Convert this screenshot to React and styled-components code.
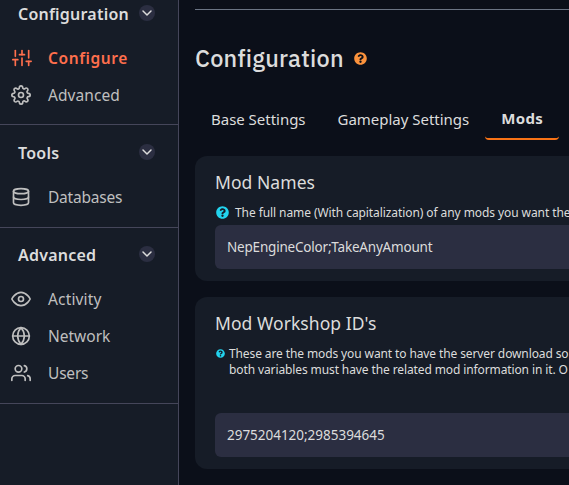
import React from "react";
import styled, { createGlobalStyle } from "styled-components";
import { FiSliders, FiSettings, FiDatabase, FiEye, FiGlobe, FiUsers, FiChevronDown } from "react-icons/fi";
import { FaQuestionCircle } from "react-icons/fa";

const GlobalStyle = createGlobalStyle`
  * { box-sizing: border-box; }
  body {
    margin: 0;
    overflow: hidden;
    background: #0b0f19;
    color: #dcdcdc;
    font-family: "Noto Sans", "Open Sans", sans-serif;
  }
`;

const Page = styled.div`
  display: flex;
  width: 100vw;
  height: 100vh;
  overflow: hidden;
`;

const Sidebar = styled.nav`
  flex: 0 0 179px;
  height: 100%;
  overflow: hidden;
  background: #161c27;
  border-right: 1px solid #45465a;
`;

const Section = styled.section`
  padding: 14px 0 12px;
  border-bottom: 1px solid #45465a;
  &:first-child { margin-top: -14px; padding-bottom: 11px; }
  &:last-child { padding-top: 13px; }
`;

const SectionHeader = styled.div`
  display: flex;
  align-items: center;
  justify-content: space-between;
  height: 28px;
  margin-bottom: 11px;
  padding: 0 23px 0 18px;
`;

const SectionTitle = styled.span`
  font-size: 16px;
  font-weight: 600;
  line-height: 28px;
  letter-spacing: 0.22px;
  white-space: nowrap;
`;

const Toggle = styled.span`
  display: flex;
  align-items: center;
  justify-content: center;
  width: 16px;
  height: 16px;
  margin-top: -2px;
  border-radius: 50%;
  background: #2b2e41;
  svg { flex: none; width: 16px; height: 16px; stroke-width: 2.2; }
`;

const NavItem = styled.a`
  display: flex;
  align-items: center;
  gap: ${(p) => (p.$active ? 16 : 17)}px;
  height: 37px;
  padding-left: ${(p) => (p.$active ? 12 : 11)}px;
  font-size: 15.5px;
  font-weight: ${(p) => (p.$active ? 600 : 400)};
  color: ${(p) => (p.$active ? "#ff6f4d" : "#bfbfbf")};
  svg { width: 20px; height: 20px; stroke-width: 2; }
  span { letter-spacing: ${(p) => p.$track || 0}px; }
`;

const Main = styled.main`
  flex: 1;
  min-width: 0;
  padding: 9px 0 0 16px;
`;

const Rule = styled.hr`
  height: 1px;
  margin: 0;
  border: 0;
  background: #6b7484;
`;

const Heading = styled.h1`
  display: flex;
  align-items: center;
  gap: 10px;
  height: 32px;
  margin: 32px 0 0;
  font-family: "IBM Plex Sans", "Noto Sans", sans-serif;
  font-size: 23.5px;
  font-weight: 500;
  letter-spacing: 0.25px;
  white-space: nowrap;
  svg { width: 13px; height: 13px; color: #fb923c; }
`;

const Tabs = styled.div`
  display: flex;
  height: 40px;
  margin-top: 26px;
`;

const Tab = styled.div`
  padding: 0 16px;
  line-height: 39px;
  font-size: 15px;
  white-space: nowrap;
  letter-spacing: -0.02px;
  border-bottom: 2px solid transparent;
  ${(p) => p.$active && `
    font-weight: 700;
    line-height: 37px;
    letter-spacing: 0.4px;
    border-color: #f97316;
    border-radius: 4px;
  `}
`;

const Card = styled.section`
  height: ${(p) => p.$height}px;
  margin: 16px -12px 0 0;
  padding: 14px 0 0 20px;
  border-radius: 12px;
  background: #161c27;
`;

const CardTitle = styled.h2`
  height: 24px;
  margin: 0;
  font-size: 17.5px;
  font-weight: 400;
  line-height: 24px;
  letter-spacing: 0.06px;
  white-space: nowrap;
`;

const Hint = styled.div`
  display: flex;
  height: ${(p) => p.$height}px;
  margin-top: 11px;
  padding-left: 1px;
  gap: ${(p) => p.$gap}px;
  font-size: 12px;
  line-height: 16px;
  white-space: nowrap;
  svg {
    flex: none;
    width: ${(p) => p.$icon}px;
    height: ${(p) => p.$icon}px;
    margin-top: ${(p) => p.$iconTop}px;
    color: #22d3ee;
  }
`;

const Line = styled.div`
  letter-spacing: ${(p) => p.$track || 0}px;
`;

const Field = styled.div`
  height: 44px;
  padding-left: 12px;
  border-radius: 6px 0 0 6px;
  background: #2b2e41;
  font-size: 13.5px;
  line-height: 44px;
  letter-spacing: ${(p) => p.$track || 0}px;
  white-space: nowrap;
`;

const sections = [
  { title: "Configuration", items: [
    { label: "Configure", icon: FiSliders, active: true, track: 0.6 },
    { label: "Advanced", icon: FiSettings, track: 0.06 },
  ] },
  { title: "Tools", items: [{ label: "Databases", icon: FiDatabase, track: -0.2 }] },
  { title: "Advanced", items: [
    { label: "Activity", icon: FiEye, track: 0.15 },
    { label: "Network", icon: FiGlobe },
    { label: "Users", icon: FiUsers, track: -0.2 },
  ] },
];

export default function App() {
  return (
    <Page>
      <GlobalStyle />
      <Sidebar>
        {sections.map((s) => (
          <Section key={s.title}>
            <SectionHeader>
              <SectionTitle>{s.title}</SectionTitle>
              <Toggle><FiChevronDown /></Toggle>
            </SectionHeader>
            {s.items.map(({ label, icon: Icon, active, track }) => (
              <NavItem key={label} $active={active} $track={track}>
                <Icon />
                <span>{label}</span>
              </NavItem>
            ))}
          </Section>
        ))}
      </Sidebar>
      <Main>
        <Rule />
        <Heading>Configuration <FaQuestionCircle /></Heading>
        <Tabs>
          <Tab>Base Settings</Tab>
          <Tab>Gameplay Settings</Tab>
          <Tab $active>Mods</Tab>
        </Tabs>
        <Card $height={125}>
          <CardTitle>Mod Names</CardTitle>
          <Hint $height={20} $gap={6} $icon={13} $iconTop={1}>
            <FaQuestionCircle />
            <Line $track={-0.08}>The full name (With capitalization) of any mods you want the</Line>
          </Hint>
          <Field $track={-0.2}>NepEngineColor;TakeAnyAmount</Field>
        </Card>
        <Card $height={172}>
          <CardTitle>Mod Workshop ID's</CardTitle>
          <Hint $height={67} $gap={4} $icon={9} $iconTop={3}>
            <FaQuestionCircle />
            <div>
              <Line $track={-0.11}>These are the mods you want to have the server download so</Line>
              <Line $track={-0.11}>both variables must have the related mod information in it. O</Line>
            </div>
          </Hint>
          <Field $track={-0.02}>2975204120;2985394645</Field>
        </Card>
      </Main>
    </Page>
  );
}
